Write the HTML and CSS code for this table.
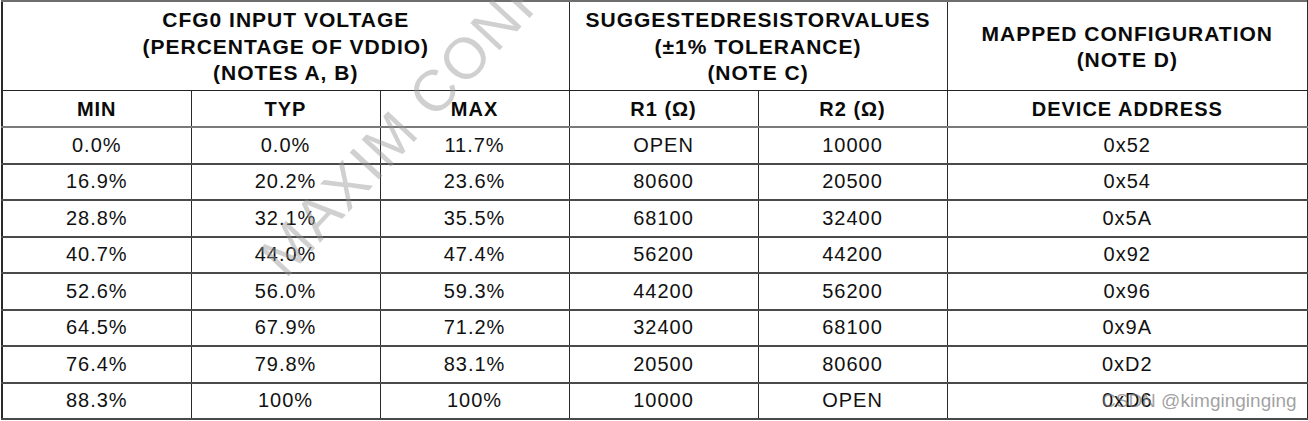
FILE: index.html
```html
<!DOCTYPE html>
<html lang="en">
<head>
<meta charset="utf-8">
<title>CFG0 mapping table</title>
<link rel="stylesheet" href="styles.css">
</head>
<body>
<div class="page">
  <table class="cfg">
    <colgroup>
      <col class="c-min"><col class="c-typ"><col class="c-max"><col class="c-r1"><col class="c-r2"><col class="c-addr">
    </colgroup>
    <thead>
      <tr class="h1">
        <th colspan="3">CFG0 INPUT VOLTAGE<br>(PERCENTAGE OF VDDIO)<br>(NOTES A, B)</th>
        <th colspan="2">SUGGESTEDRESISTORVALUES<br>(±1% TOLERANCE)<br>(NOTE C)</th>
        <th>MAPPED CONFIGURATION<br>(NOTE D)</th>
      </tr>
      <tr class="h2">
        <th>MIN</th><th>TYP</th><th>MAX</th><th>R1 (Ω)</th><th>R2 (Ω)</th><th>DEVICE ADDRESS</th>
      </tr>
    </thead>
    <tbody>
      <tr><td>0.0%</td><td>0.0%</td><td>11.7%</td><td>OPEN</td><td>10000</td><td>0x52</td></tr>
      <tr><td>16.9%</td><td>20.2%</td><td>23.6%</td><td>80600</td><td>20500</td><td>0x54</td></tr>
      <tr><td>28.8%</td><td>32.1%</td><td>35.5%</td><td>68100</td><td>32400</td><td>0x5A</td></tr>
      <tr><td>40.7%</td><td>44.0%</td><td>47.4%</td><td>56200</td><td>44200</td><td>0x92</td></tr>
      <tr><td>52.6%</td><td>56.0%</td><td>59.3%</td><td>44200</td><td>56200</td><td>0x96</td></tr>
      <tr><td>64.5%</td><td>67.9%</td><td>71.2%</td><td>32400</td><td>68100</td><td>0x9A</td></tr>
      <tr><td>76.4%</td><td>79.8%</td><td>83.1%</td><td>20500</td><td>80600</td><td>0xD2</td></tr>
      <tr><td>88.3%</td><td>100%</td><td>100%</td><td>10000</td><td>OPEN</td><td>0xD6</td></tr>
    </tbody>
  </table>
  <div class="wm-maxim">MAXIM CONFIDENTIAL</div>
  <div class="wm-csdn">CSDN @kimginginging</div>
</div>
</body>
</html>
```

FILE: styles.css
```css
html, body {
  margin: 0;
  padding: 0;
  background: #ffffff;
}

.page {
  position: relative;
  width: 1308px;
  height: 421px;
  overflow: hidden;
  font-family: "Liberation Sans", Arial, sans-serif;
  color: #111111;
}

.cfg {
  border-collapse: collapse;
  table-layout: fixed;
  width: 1306px;
  margin: 0 0 0 1px;
}

.c-min, .c-typ, .c-max, .c-r1, .c-r2 { width: 189px; }
.c-addr { width: 361px; }

.cfg th, .cfg td {
  padding: 0;
  text-align: center;
  vertical-align: middle;
  border-left: 1px solid #2a2a2a;
  border-right: 1px solid #2a2a2a;
  letter-spacing: 1px;
}

.cfg th:first-child, .cfg td:first-child { border-left: 2px solid #2a2a2a; }
.cfg th:last-child, .cfg td:last-child { border-right: 2px solid #2a2a2a; }

.h1 th {
  height: 86px;
  padding-top: 2px;
  font-size: 21px;
  line-height: 26.5px;
  font-weight: bold;
  color: #0a0a0a;
  border-top: 2px solid #6e6e6e;
  border-bottom: 1px solid #222;
}

.h2 th {
  height: 33px;
  padding-top: 2px;
  font-size: 20px;
  font-weight: bold;
  color: #0a0a0a;
  border-bottom: 2px solid #7a7a7a;
}

.cfg td {
  height: 34.5px;
  font-size: 20px;
  font-weight: normal;
  border-bottom: 2px solid #4a4a4a;
}

.wm-maxim {
  position: absolute;
  left: 292px;
  top: 228px;
  transform-origin: 0 100%;
  transform: rotate(-47deg);
  font-size: 58px;
  line-height: 58px;
  letter-spacing: 2px;
  color: rgba(150, 150, 150, 0.45);
  white-space: nowrap;
  pointer-events: none;
}

.wm-csdn {
  position: absolute;
  left: 1102px;
  top: 390px;
  font-size: 19px;
  line-height: 22px;
  color: rgba(120, 120, 120, 0.7);
  white-space: nowrap;
  pointer-events: none;
}
```
